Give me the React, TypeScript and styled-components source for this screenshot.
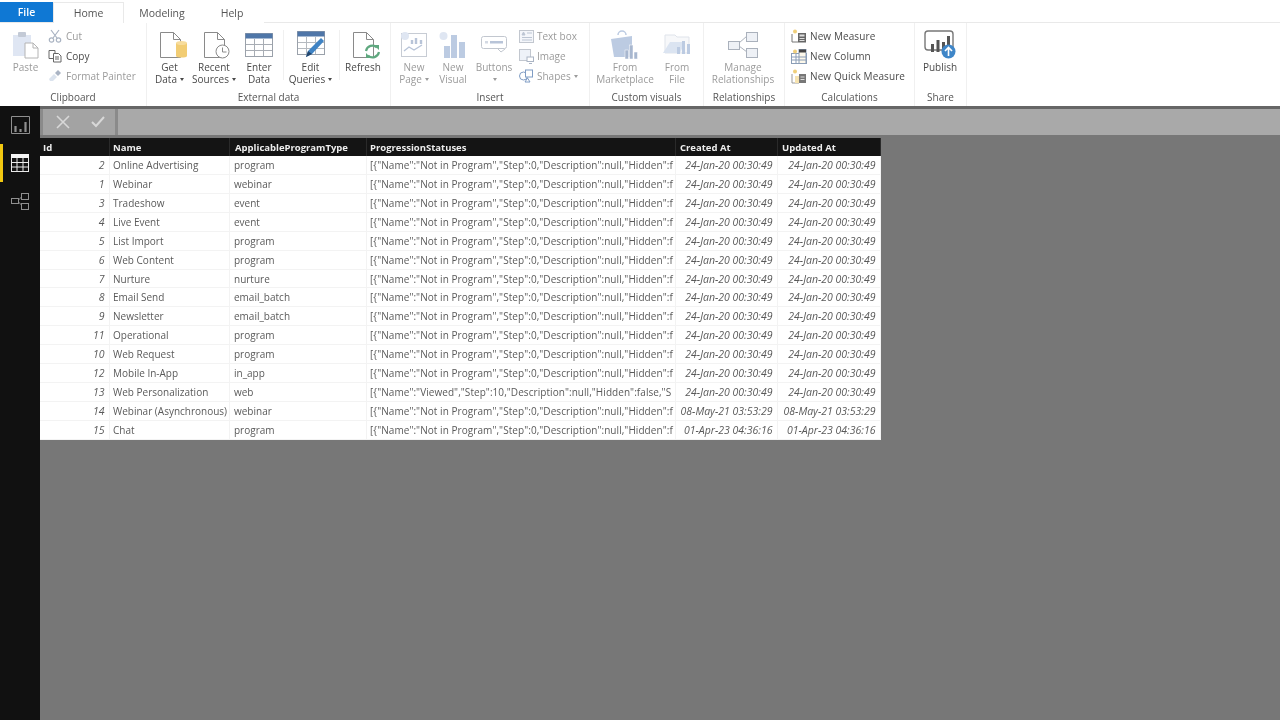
import React from 'react';
import styled, { createGlobalStyle } from 'styled-components';

const GlobalStyle = createGlobalStyle`
  html, body {
    margin: 0;
    width: 1280px;
    height: 720px;
    overflow: hidden;
    background: #777;
  }
  body {
    font-family: "Open Sans", "Noto Sans", "Liberation Sans", sans-serif;
    font-size: 10px;
  }
  * { box-sizing: border-box; }
`;

type Row = [string, string, string, string, string, string];

// the column cuts these off in the screenshot, so only the visible part is kept
const NOT_IN = '[{"Name":"Not in Program","Step":0,"Description":null,"Hidden":f';
const VIEWED = '[{"Name":"Viewed","Step":10,"Description":null,"Hidden":false,"S';
const JAN = '24-Jan-20 00:30:49';

const rows: Row[] = [
  ['2', 'Online Advertising', 'program', NOT_IN, JAN, JAN],
  ['1', 'Webinar', 'webinar', NOT_IN, JAN, JAN],
  ['3', 'Tradeshow', 'event', NOT_IN, JAN, JAN],
  ['4', 'Live Event', 'event', NOT_IN, JAN, JAN],
  ['5', 'List Import', 'program', NOT_IN, JAN, JAN],
  ['6', 'Web Content', 'program', NOT_IN, JAN, JAN],
  ['7', 'Nurture', 'nurture', NOT_IN, JAN, JAN],
  ['8', 'Email Send', 'email_batch', NOT_IN, JAN, JAN],
  ['9', 'Newsletter', 'email_batch', NOT_IN, JAN, JAN],
  ['11', 'Operational', 'program', NOT_IN, JAN, JAN],
  ['10', 'Web Request', 'program', NOT_IN, JAN, JAN],
  ['12', 'Mobile In-App', 'in_app', NOT_IN, JAN, JAN],
  ['13', 'Web Personalization', 'web', VIEWED, JAN, JAN],
  ['14', 'Webinar (Asynchronous)', 'webinar', NOT_IN, '08-May-21 03:53:29', '08-May-21 03:53:29'],
  ['15', 'Chat', 'program', NOT_IN, '01-Apr-23 04:36:16', '01-Apr-23 04:36:16'],
];

const PasteIcon = () => (
  <svg width="28" height="28" viewBox="0 0 28 28">
    <rect x="1" y="4" width="18" height="21" fill="#dfe6f3" />
    <rect x="6" y="1" width="8" height="5" rx="1" fill="#c3cad6" />
    <path d="M13 12h8l5 5v10H13z" fill="#fff" stroke="#b4b4b4" />
    <path d="M21 12v5h5" fill="none" stroke="#b4b4b4" />
  </svg>
);

const CutIcon = () => (
  <svg width="14" height="14" viewBox="0 0 14 14" fill="none" stroke="#a9b3c2" strokeWidth="1.2">
    <path d="M3 1l6 8M11 1L5 9" />
    <circle cx="3.5" cy="11" r="2.2" />
    <circle cx="10.5" cy="11" r="2.2" />
  </svg>
);

const CopyIcon = () => (
  <svg width="14" height="14" viewBox="0 0 14 14" fill="#fff" stroke="#666">
    <path d="M1 1.5h6v8H1z" />
    <path d="M5.5 4.5h5l2.500 2.500v6h-7.500z" />
    <path d="M7 8h4M7 10h4" />
  </svg>
);

const PainterIcon = () => (
  <svg width="14" height="14" viewBox="0 0 14 14">
    <path d="M1 10l5-5 3 3-4 4H2z" fill="#dbe3ee" />
    <path d="M7 4l3-3 3 3-3 3z" fill="#aab4c4" />
  </svg>
);

const Doc = ({ children }: { children?: React.ReactNode }) => (
  <svg width="34" height="28" viewBox="0 0 34 28">
    <path d="M7.500 1.500h13l7 7v18h-20z" fill="#fff" stroke="#8a8a8a" />
    <path d="M20.500 1.500v7h7" fill="none" stroke="#8a8a8a" />
    {children}
  </svg>
);

const GetDataIcon = () => (
  <Doc>
    <path d="M23 12v13c0 2 11 2 11 0V12z" fill="#f2cd74" />
    <ellipse cx="28.500" cy="12" rx="5.500" ry="2" fill="#f7dc9c" />
  </Doc>
);

const RecentIcon = () => (
  <Doc>
    <circle cx="25.500" cy="20.500" r="6.500" fill="#fff" stroke="#8a8a8a" />
    <path d="M25.500 16.500v4.500h4" fill="none" stroke="#8a8a8a" />
  </Doc>
);

const RefreshIcon = () => (
  <Doc>
    <path d="M20 20a6.500 6.500 0 0 1 11-3.500M33 21a6.500 6.500 0 0 1-11 3.500" fill="none" stroke="#5fa87f" strokeWidth="2.200" />
    <path d="M28 14h5v5zM25 27h-5v-5z" fill="#5fa87f" />
  </Doc>
);

const EnterDataIcon = () => (
  <svg width="28" height="24" viewBox="0 0 28 24">
    <rect x="0.500" y="0.500" width="27" height="23" fill="#fff" stroke="#9aa1aa" />
    <rect x="0.500" y="0.500" width="27" height="5" fill="#4f76a8" />
    <path d="M9.500 6v17M18.500 6v17M1 11.500h26M1 17.500h26" stroke="#a8adb4" />
  </svg>
);

const EditQueriesIcon = () => (
  <svg width="28" height="27" viewBox="0 0 28 27">
    <rect x="0.500" y="0.500" width="27" height="23" fill="#fff" stroke="#9aa1aa" />
    <rect x="0.500" y="0.500" width="27" height="5" fill="#4f76a8" />
    <path d="M9.500 6v17M18.500 6v17M1 11.500h26M1 17.500h26" stroke="#b5bac0" />
    <path d="M9 26l2-6L24 7l3 3-12 13z" fill="#3f83c4" />
    <path d="M9 26l2-6 4 3z" fill="#24466c" />
  </svg>
);

const NewPageIcon = () => (
  <svg width="28" height="28" viewBox="0 0 28 28">
    <rect x="1.500" y="2.500" width="25" height="23" fill="#fff" stroke="#c7ccd4" />
    <path d="M12 13V9M16 13V7M21 13V9" stroke="#b8c4d8" strokeWidth="2.400" />
    <path d="M4 20l5-4 5 3 8-5" fill="none" stroke="#b8c4d8" strokeWidth="1.400" />
    <circle cx="5" cy="5" r="4" fill="#dfe6f2" />
  </svg>
);

const NewVisualIcon = () => (
  <svg width="28" height="28" viewBox="0 0 28 28">
    <circle cx="4.500" cy="5" r="4" fill="#dfe6f2" />
    <rect x="5" y="15" width="6" height="12" fill="#bccbe2" />
    <rect x="12" y="4" width="6" height="23" fill="#bccbe2" />
    <rect x="20" y="11" width="6" height="16" fill="#bccbe2" />
  </svg>
);

const ButtonsIcon = () => (
  <svg width="28" height="20" viewBox="0 0 28 20">
    <rect x="1.500" y="1.500" width="25" height="12" rx="2" fill="#fff" stroke="#c2c7cf" />
    <rect x="10" y="6" width="13" height="2.500" fill="#b8c4d8" />
    <rect x="5" y="6" width="3" height="2.500" fill="#d3d9e3" />
    <path d="M18 14l3 3 4-3" fill="none" stroke="#c2c7cf" />
  </svg>
);

const TextBoxIcon = () => (
  <svg width="15" height="13" viewBox="0 0 15 13">
    <rect x="0.500" y="0.500" width="14" height="12" fill="#f4f6fa" stroke="#c2c7cf" />
    <path d="M3 5l1.500-3L6 5zM8 3h5M3 7.500h10M3 10h10" stroke="#bcc5d3" fill="#bcc5d3" />
  </svg>
);

const ImageIcon = () => (
  <svg width="15" height="15" viewBox="0 0 15 15">
    <rect x="0.500" y="0.500" width="11" height="11" fill="#eef2f8" stroke="#c2c7cf" />
    <rect x="8" y="8" width="6.500" height="4.500" fill="#fff" stroke="#aab4c4" />
    <path d="M10 14.500h3" stroke="#aab4c4" />
  </svg>
);

const ShapesIcon = () => (
  <svg width="15" height="14" viewBox="0 0 15 14" fill="none" stroke="#7f9cc4">
    <circle cx="4.500" cy="7" r="4" />
    <rect x="6.500" y="1" width="7" height="7" fill="#fff" />
    <path d="M6 13l2.500-4 2.500 4z" />
  </svg>
);

const MarketplaceIcon = () => (
  <svg width="30" height="30" viewBox="0 0 30 30">
    <path d="M8 5a4 4 0 0 1 8 0" fill="none" stroke="#bccbe2" strokeWidth="1.500" />
    <path d="M1 9l21-3v21H4z" fill="#bccbe2" />
    <rect x="15" y="20" width="3.500" height="9" fill="#a8b7cf" stroke="#fff" strokeWidth="0.500" />
    <rect x="19.500" y="15" width="3.500" height="14" fill="#a8b7cf" stroke="#fff" strokeWidth="0.500" />
    <rect x="24" y="22" width="3.500" height="7" fill="#a8b7cf" stroke="#fff" strokeWidth="0.500" />
  </svg>
);

const FromFileIcon = () => (
  <svg width="30" height="24" viewBox="0 0 30 24">
    <path d="M3 2h10l2 2h12v16H3z" fill="#f7f8fa" stroke="#dfe3ea" />
    <path d="M1 20l7-11h15l-5 11z" fill="#dbe4f1" />
    <rect x="15" y="14" width="3" height="7" fill="#bccbe2" />
    <rect x="20" y="8" width="3" height="13" fill="#bccbe2" />
    <rect x="25" y="11" width="3" height="10" fill="#bccbe2" />
  </svg>
);

const ManageIcon = () => (
  <svg width="30" height="28" viewBox="0 0 30 28" fill="#eef1f6" stroke="#aab1bc">
    <path d="M11 12l8-7M11 15l8 6" fill="none" />
    <rect x="0.500" y="10.500" width="11" height="8" />
    <rect x="18.500" y="1.500" width="11" height="9" />
    <rect x="18.500" y="17.500" width="11" height="9" />
  </svg>
);

const NewMeasureIcon = () => (
  <svg width="16" height="14" viewBox="0 0 16 14">
    <path d="M1 5v8h6" fill="none" stroke="#777" />
    <circle cx="4" cy="2.500" r="2" fill="#f0cf7a" />
    <rect x="7" y="4" width="8" height="9.500" fill="#666" />
    <rect x="8.500" y="5.500" width="5" height="2" fill="#ddd" />
    <path d="M8.500 9.500h5M8.500 11.500h5" stroke="#ddd" />
  </svg>
);

const NewColumnIcon = () => (
  <svg width="16" height="15" viewBox="0 0 16 15">
    <rect x="0.500" y="4.500" width="15" height="10" fill="#fff" stroke="#8a9db6" />
    <rect x="8" y="0.500" width="7" height="14" fill="#fdf8ea" stroke="#8a9db6" />
    <rect x="8" y="0.500" width="7" height="3" fill="#444" />
    <path d="M5 5v9M1 8h14M1 11h14" stroke="#8a9db6" />
    <circle cx="4" cy="2.500" r="2" fill="#f0cf7a" />
  </svg>
);

const QuickMeasureIcon = () => (
  <svg width="16" height="15" viewBox="0 0 16 15">
    <path d="M1 5v9h7" fill="none" stroke="#999" />
    <circle cx="4" cy="2.500" r="2" fill="#f0cf7a" />
    <path d="M4 7h5v7H4z" fill="#f6e3b0" />
    <rect x="8" y="5" width="7" height="9" fill="#777" />
    <path d="M9.500 8h4M9.500 10.500h4" stroke="#ddd" />
  </svg>
);

const PublishIcon = () => (
  <svg width="32" height="30" viewBox="0 0 32 30">
    <rect x="1" y="1" width="28" height="19" rx="3" fill="#fff" stroke="#777" strokeWidth="1.400" />
    <rect x="7" y="14" width="3" height="8" fill="#555" />
    <rect x="12.500" y="10" width="3" height="12" fill="#555" />
    <rect x="18" y="12" width="3" height="10" fill="#555" />
    <rect x="23" y="6" width="3" height="12" fill="#555" />
    <circle cx="24.500" cy="21.500" r="7" fill="#3f86c8" />
    <path d="M24.500 26v-8M21 21l3.500-3.500L28 21" fill="none" stroke="#fff" strokeWidth="1.600" />
  </svg>
);

const ReportIcon = () => (
  <svg width="19" height="18" viewBox="0 0 19 18" fill="none" stroke="#8f8f8f">
    <path d="M.5 17.500V.5h18v17" />
    <path d="M.5 17.500h18" />
    <path d="M4.500 16v-6M9.500 16v-3M14.500 16V6" strokeWidth="2.200" />
  </svg>
);

const DataViewIcon = () => (
  <svg width="18" height="18" viewBox="0 0 18 18">
    <rect x="0.500" y="0.500" width="17" height="17" fill="none" stroke="#e9e9e9" />
    <rect x="0" y="0" width="18" height="4" fill="#f4f4f4" />
    <path d="M6 4v14M12 4v14M0 8.500h18M0 13h18" stroke="#e9e9e9" />
  </svg>
);

const ModelIcon = () => (
  <svg width="18" height="17" viewBox="0 0 18 17" fill="none" stroke="#8f8f8f">
    <rect x="0.500" y="5.500" width="7" height="5" />
    <rect x="10.500" y="0.500" width="7" height="6" />
    <rect x="10.500" y="10.500" width="7" height="6" />
    <path d="M7.500 7l3-3M7.500 9l3 3" />
  </svg>
);

export default function App() {
  return (
    <>
      <GlobalStyle />
      <Page>
        <TabBar>
          <FileTab>File</FileTab>
          <Tab $active $width={71}>Home</Tab>
          <Tab $width={76}>Modeling</Tab>
          <Tab $width={64}>Help</Tab>
        </TabBar>

        <Ribbon>
          <Group $width={147} $pad={13} label="Clipboard">
            <LargeButton $width={25} disabled>
              <IconSlot><PasteIcon /></IconSlot>
              <Label>Paste</Label>
            </LargeButton>
            <SmallColumn $left={10}>
              <SmallButton disabled><SmallIcon><CutIcon /></SmallIcon>Cut</SmallButton>
              <SmallButton><SmallIcon><CopyIcon /></SmallIcon>Copy</SmallButton>
              <SmallButton disabled><SmallIcon><PainterIcon /></SmallIcon>Format Painter</SmallButton>
            </SmallColumn>
          </Group>

          <Group $width={244} $pad={2} label="External data">
            <LargeButton $width={41}>
              <IconSlot><GetDataIcon /></IconSlot>
              <Label>Get<br />Data<Caret /></Label>
            </LargeButton>
            <LargeButton $width={48}>
              <IconSlot><RecentIcon /></IconSlot>
              <Label>Recent<br />Sources<Caret /></Label>
            </LargeButton>
            <LargeButton $width={42}>
              <IconSlot><EnterDataIcon /></IconSlot>
              <Label>Enter<br />Data</Label>
            </LargeButton>
            <Divider />
            <LargeButton $width={47}>
              <IconSlot><EditQueriesIcon /></IconSlot>
              <Label>Edit<br />Queries<Caret /></Label>
            </LargeButton>
            <Divider $left={5} />
            <LargeButton $width={40}>
              <IconSlot><RefreshIcon /></IconSlot>
              <Label>Refresh</Label>
            </LargeButton>
          </Group>

          <Group $width={199} $pad={3} label="Insert">
            <LargeButton $width={40} disabled>
              <IconSlot><NewPageIcon /></IconSlot>
              <Label>New<br />Page<Caret /></Label>
            </LargeButton>
            <LargeButton $width={38} disabled>
              <IconSlot><NewVisualIcon /></IconSlot>
              <Label>New<br />Visual</Label>
            </LargeButton>
            <LargeButton $width={44} disabled>
              <IconSlot><ButtonsIcon /></IconSlot>
              <Label>Buttons<br /><Caret /></Label>
            </LargeButton>
            <SmallColumn $left={3}>
              <SmallButton disabled><SmallIcon><TextBoxIcon /></SmallIcon>Text box</SmallButton>
              <SmallButton disabled><SmallIcon><ImageIcon /></SmallIcon>Image</SmallButton>
              <SmallButton disabled><SmallIcon><ShapesIcon /></SmallIcon>Shapes<Caret /></SmallButton>
            </SmallColumn>
          </Group>

          <Group $width={114} $pad={3} label="Custom visuals">
            <LargeButton $width={64} disabled>
              <IconSlot><MarketplaceIcon /></IconSlot>
              <Label>From<br />Marketplace</Label>
            </LargeButton>
            <LargeButton $width={40} disabled>
              <IconSlot><FromFileIcon /></IconSlot>
              <Label>From<br />File</Label>
            </LargeButton>
          </Group>

          <Group $width={81} $pad={3} label="Relationships">
            <LargeButton $width={72} disabled>
              <IconSlot><ManageIcon /></IconSlot>
              <Label>Manage<br />Relationships</Label>
            </LargeButton>
          </Group>

          <Group $width={130} $pad={6} label="Calculations">
            <SmallColumn $left={0}>
              <SmallButton $spaced><SmallIcon $width={19}><NewMeasureIcon /></SmallIcon>New Measure</SmallButton>
              <SmallButton $spaced><SmallIcon $width={19}><NewColumnIcon /></SmallIcon>New Column</SmallButton>
              <SmallButton $spaced><SmallIcon $width={19}><QuickMeasureIcon /></SmallIcon>New Quick Measure</SmallButton>
            </SmallColumn>
          </Group>

          <Group $width={52} $pad={3} label="Share">
            <LargeButton $width={44}>
              <IconSlot><PublishIcon /></IconSlot>
              <Label>Publish</Label>
            </LargeButton>
          </Group>
        </Ribbon>

        <Body>
          <Sidebar>
            <ViewButton><ReportIcon /></ViewButton>
            <ViewButton $active><DataViewIcon /></ViewButton>
            <ViewButton><ModelIcon /></ViewButton>
          </Sidebar>

          <Content>
            <FormulaBar>
              <FormulaActions>
                <svg width="14" height="14" viewBox="0 0 14 14" stroke="#d8d8d8" strokeWidth="1.600">
                  <path d="M1 1l12 12M13 1L1 13" />
                </svg>
                <svg width="14" height="12" viewBox="0 0 14 12" fill="none" stroke="#d8d8d8" strokeWidth="2">
                  <path d="M1 6l4 4 8-9" />
                </svg>
              </FormulaActions>
              <FormulaInput />
            </FormulaBar>

            <Table>
              <HeaderRow>
                <HeaderCell>Id</HeaderCell>
                <HeaderCell>Name</HeaderCell>
                <HeaderCell $pad={5}>ApplicableProgramType</HeaderCell>
                <HeaderCell>ProgressionStatuses</HeaderCell>
                <HeaderCell $pad={4}>Created At</HeaderCell>
                <HeaderCell $pad={4}>Updated At</HeaderCell>
              </HeaderRow>
              {rows.map((row) => (
                <DataRow key={row[0]}>
                  <Cell $number>{row[0]}</Cell>
                  <Cell>{row[1]}</Cell>
                  <Cell $pad={4}>{row[2]}</Cell>
                  <Cell $spaced>{row[3]}</Cell>
                  <Cell $number>{row[4]}</Cell>
                  <Cell $number>{row[5]}</Cell>
                </DataRow>
              ))}
            </Table>
          </Content>
        </Body>
      </Page>
    </>
  );
}

function Group({ label, children, $width, $pad }: { label: string; children: React.ReactNode; $width: number; $pad: number }) {
  return (
    <GroupBox $width={$width}>
      <GroupBody $pad={$pad}>{children}</GroupBody>
      <GroupLabel>{label}</GroupLabel>
    </GroupBox>
  );
}

const Page = styled.div`
  width: 1280px;
  height: 720px;
  display: flex;
  flex-direction: column;
  background: #777;
  color: #444;
  filter: blur(0.35px);
`;

const TabBar = styled.div`
  height: 23px;
  padding-top: 2px;
  display: flex;
  background: #fff;
  border-bottom: 1px solid #e9e9e9;
`;

const FileTab = styled.div`
  width: 53px;
  height: 20px;
  display: flex;
  align-items: center;
  justify-content: center;
  background: #0f78d4;
  color: #fff;
  font-size: 10.500px;
  font-weight: 600;
`;

const Tab = styled.div<{ $active?: boolean; $width: number }>`
  width: ${(p) => p.$width}px;
  height: 21px;
  display: flex;
  align-items: center;
  justify-content: center;
  background: #fff;
  color: #555;
  font-size: 10.500px;
  border: 1px solid ${(p) => (p.$active ? '#e9e9e9' : 'transparent')};
  border-bottom: 0;
  margin-bottom: -1px;
  position: relative;
`;

const Ribbon = styled.div`
  height: 83px;
  display: flex;
  background: #fff;
`;

const GroupBox = styled.div<{ $width: number }>`
  width: ${(p) => p.$width}px;
  display: flex;
  flex-direction: column;
  border-right: 1px solid #f0f0f0;
`;

const GroupBody = styled.div<{ $pad: number }>`
  flex: 1;
  display: flex;
  padding: 5px 0 0 ${(p) => p.$pad}px;
`;

const GroupLabel = styled.div`
  height: 17px;
  line-height: 16px;
  text-align: center;
  color: #555;
  font-size: 10px;
`;

const LargeButton = styled.div<{ $width: number; disabled?: boolean }>`
  width: ${(p) => p.$width}px;
  flex: none;
  display: flex;
  flex-direction: column;
  align-items: center;
  color: ${(p) => (p.disabled ? '#9b9b9b' : '#4a4a4a')};
`;

const IconSlot = styled.div`
  height: 33px;
  display: flex;
  align-items: center;
  justify-content: center;
`;

const Label = styled.div`
  text-align: center;
  line-height: 12px;
  white-space: nowrap;
  font-size: 10px;
`;

const Caret = styled.span`
  display: inline-block;
  margin-left: 3px;
  vertical-align: 2px;
  border-left: 2.500px solid transparent;
  border-right: 2.500px solid transparent;
  border-top: 3px solid currentColor;
`;

const Divider = styled.div<{ $left?: number }>`
  width: 1px;
  height: 50px;
  flex: none;
  margin: 2px 3px 0 ${(p) => p.$left ?? 3}px;
  background: #f0f0f0;
`;

const SmallColumn = styled.div<{ $left: number }>`
  margin-left: ${(p) => p.$left}px;
  display: flex;
  flex-direction: column;
  gap: 4px;
`;

const SmallButton = styled.div<{ disabled?: boolean; $spaced?: boolean }>`
  height: 16px;
  display: flex;
  align-items: center;
  white-space: nowrap;
  color: ${(p) => (p.disabled ? '#9b9b9b' : '#4a4a4a')};
  font-size: 10px;
  letter-spacing: ${(p) => (p.$spaced ? '0.1px' : '0')};
`;

const SmallIcon = styled.span<{ $width?: number }>`
  width: ${(p) => p.$width ?? 18}px;
  display: flex;
  align-items: center;
  flex: none;
`;

const Body = styled.div`
  flex: 1;
  display: flex;
  min-height: 0;
  border-top: 3px solid #666;
`;

const Sidebar = styled.div`
  width: 40px;
  margin-top: -3px;
  background: #111;
  position: relative;
  display: flex;
  flex-direction: column;
  align-items: stretch;
`;

const ViewButton = styled.div<{ $active?: boolean }>`
  height: 38px;
  display: flex;
  align-items: center;
  justify-content: center;
  border-left: 3px solid ${(p) => (p.$active ? '#f2c811' : 'transparent')};
  padding-right: 3px;
`;

const Content = styled.div`
  flex: 1;
  display: flex;
  flex-direction: column;
`;

const FormulaBar = styled.div`
  height: 26px;
  padding-left: 3px;
  margin-bottom: 3px;
  display: flex;
  gap: 3px;
  background: #8a8a8a;
`;

const FormulaActions = styled.div`
  width: 72px;
  padding: 0 0 0 3px;
  display: flex;
  align-items: center;
  justify-content: space-around;
  background: #a3a3a3;
`;

const FormulaInput = styled.div`
  flex: 1;
  background: #a9a9a9;
`;

const Table = styled.div`
  width: 841px;
  background: #fff;
`;

const HeaderRow = styled.div`
  display: grid;
  grid-template-columns: 70px 120px 137px 309px 102px 103px;
  height: 18px;
  background: #141414;
`;

const HeaderCell = styled.div<{ $pad?: number }>`
  display: flex;
  align-items: center;
  padding-left: ${(p) => p.$pad ?? 3}px;
  color: #eee;
  font-size: 9.500px;
  font-weight: 700;
  white-space: nowrap;
  border-right: 1px solid #2a2a2a;
`;

const DataRow = styled.div`
  display: grid;
  grid-template-columns: 70px 120px 137px 309px 102px 103px;
  height: 18.930px;
  border-bottom: 1px solid #f3f3f3;
`;

const Cell = styled.div<{ $number?: boolean; $pad?: number; $spaced?: boolean }>`
  padding: ${(p) => (p.$number ? '0 4.500px 0 0' : `0 0 0 ${p.$pad ?? 3}px`)};
  line-height: 18px;
  text-align: ${(p) => (p.$number ? 'right' : 'left')};
  font-style: ${(p) => (p.$number ? 'italic' : 'normal')};
  color: #5a5a5a;
  font-size: ${(p) => (p.$number ? '10.500px' : '10px')};
  letter-spacing: ${(p) => (p.$spaced ? '0.06px' : '0')};
  white-space: nowrap;
  border-right: 1px solid #f3f3f3;
`;
